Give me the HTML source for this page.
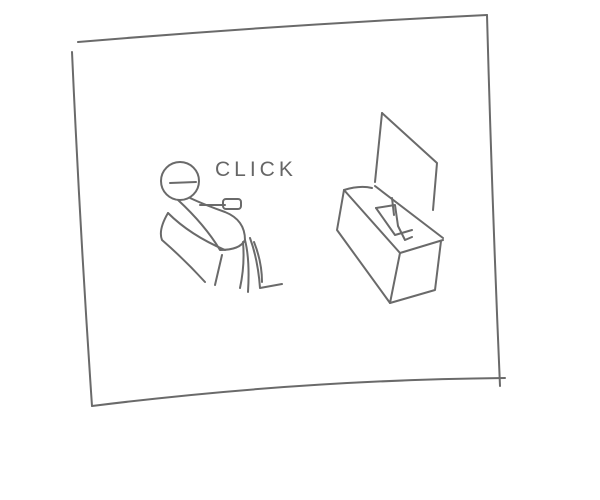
<!DOCTYPE html>
<html><head><meta charset="utf-8"><style>
html,body{margin:0;padding:0;background:#fff;}
svg{display:block}
</style></head><body>
<svg width="600" height="500" viewBox="0 0 600 500" xmlns="http://www.w3.org/2000/svg">
<g fill="none" stroke="#6a6a6a" stroke-width="2" stroke-linecap="round" stroke-linejoin="round" style="filter:blur(0.3px)">
<!-- frame -->
<path d="M78 42 Q280 25 487 15"/>
<path d="M72 52 Q80 230 92 406"/>
<path d="M92 406 Q300 380 505 378"/>
<path d="M487 15 Q492 200 500 386"/>
<!-- head -->
<circle cx="180" cy="181" r="19"/>
<path d="M170 183 L196 182"/>
<!-- body -->
<path d="M178 200 Q205 225 220 250 Q240 250 245 240 Q245 220 225 212 Q205 205 190 198"/>
<path d="M200 205 L225 205"/>
<rect x="223" y="199" width="18" height="10" rx="3"/>
<!-- chair -->
<path d="M168 213 Q158 230 162 240 Q185 260 205 282"/>
<path d="M168 213 Q190 235 225 250"/>
<path d="M222 255 L215 285"/>
<!-- legs -->
<path d="M245 240 Q250 260 248 292"/>
<path d="M250 238 Q258 260 260 288 L282 284"/>
<path d="M243 242 Q245 265 240 288"/>
<path d="M254 242 Q262 262 262 282"/>
<!-- TV screen -->
<path d="M382 113 L437 163 L433 210"/>
<path d="M382 113 L375 182"/>
<!-- stand -->
<path d="M344 190 Q360 185 372 188"/>
<path d="M344 190 L400 253 L443 240"/>
<path d="M375 186 L443 238"/>
<path d="M344 190 L337 230 L390 303 L435 290 L441 241"/>
<path d="M400 253 L390 303"/>
<!-- inner object -->
<path d="M376 208 L395 205 L398 226 L405 240 L412 237"/>
<path d="M376 208 L395 235 L412 230"/>
<path d="M392 198 L394 215"/>
</g>
<text x="215" y="176" font-family="Liberation Sans, sans-serif" font-size="21" fill="#666" letter-spacing="4">CLICK</text>
</svg>
</body></html>
